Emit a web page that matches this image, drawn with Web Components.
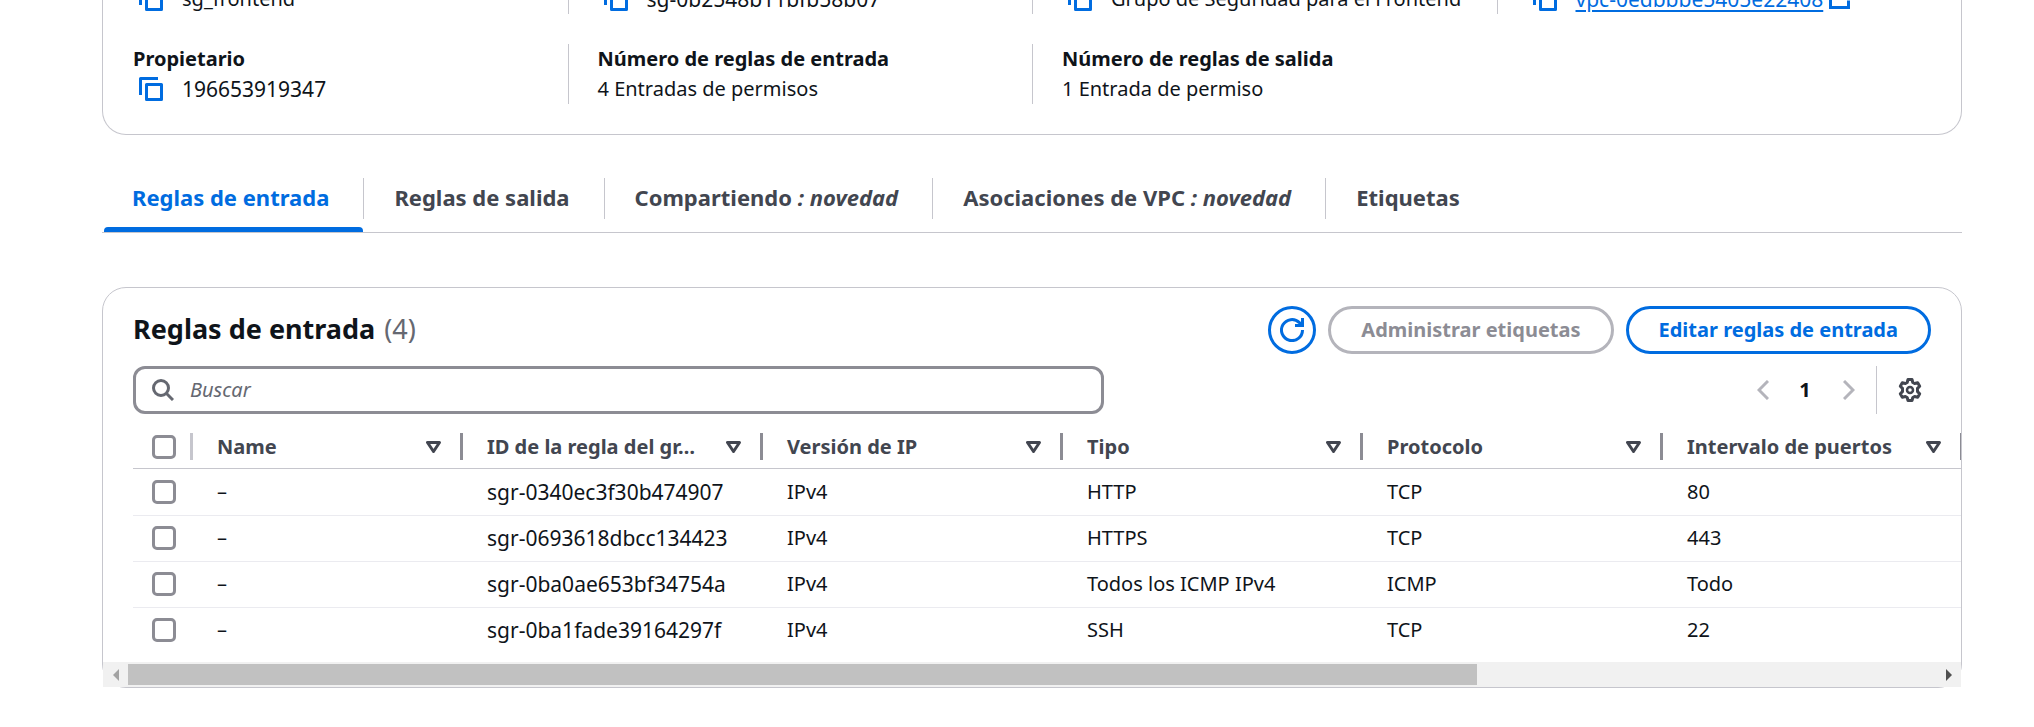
<!DOCTYPE html>
<html lang="es">
<head>
<meta charset="utf-8">
<title>sg_frontend</title>
<style>
  :root {
    --text: #0f141a;
    --heading: #424650;
    --muted: #656871;
    --link: #006ce0;
    --line: #c6c6cd;
    --line-soft: #ebebf0;
    --control: #8c8c94;
    --disabled: #b4b4bb;
    --id-size: 21px;
  }
  body {
    margin: 0;
    background: #fff;
    color: var(--text);
    font: 20px/30px "Noto Sans", "Open Sans", sans-serif;
    overflow: hidden;
  }
</style>
</head>
<body>
<security-group-page></security-group-page>

<script>
const define = (name, html, setup) => {
  const template = document.createElement('template');
  template.innerHTML = html;
  customElements.define(name, class extends HTMLElement {
    connectedCallback() {
      if (this.shadowRoot) return;
      this.attachShadow({ mode: 'open' }).append(template.content.cloneNode(true));
      if (setup) setup(this, this.shadowRoot);
    }
  });
};

/* Copy-to-clipboard button followed by its value */
define('copy-value', `
  <style>
    :host { display: flex; align-items: center; height: 30px; }
    button { display: flex; flex: none; margin: 0 19px 0 6px; padding: 0; border: 0; background: none; color: var(--link); }
  </style>
  <button type="button" aria-label="Copiar">
    <svg width="24" height="24" viewBox="0 0 24 24" fill="none" stroke="currentColor" stroke-width="3">
      <path d="M1.5 18V1.5H19" stroke-linejoin="round"/><path d="M7.5 7.5h15v15h-15z" stroke-linejoin="round"/>
    </svg>
  </button>
  <slot></slot>`);

/* External link with its trailing icon */
define('external-link', `
  <style>
    :host { display: block; }
    a { display: flex; color: var(--link); font-size: var(--id-size); text-decoration: underline; text-decoration-thickness: 2px; text-underline-offset: 3px; }
    svg { margin: 2px 0 0 6px; }
  </style>
  <a href="#vpc"><slot></slot>
    <svg width="21" height="23" viewBox="0 0 21 23" fill="none" stroke="currentColor" stroke-width="3">
      <path d="M8 3H1.500v18.500h18v-7"/><path d="M12 2h7.500v8M19.500 2L9 13"/>
    </svg>
  </a>`);

define('detail-item', `
  <style>
    :host { display: block; box-sizing: border-box; border-left: 1px solid var(--line); padding-left: 29px; }
    :host([first]) { border-color: transparent; }
    ::slotted([slot=label]) { display: block; font-weight: 700; }
  </style>
  <slot name="label"></slot><slot></slot>`);

define('detail-panel', `
  <style>
    :host { display: flow-root; }
    .panel { display: grid; grid-template-columns: repeat(4, 1fr); row-gap: 30px; margin: -16px 0 0; padding-bottom: 30px;
      border: 1px solid var(--line); border-top: 0; border-radius: 0 0 24px 24px; }
    .id { font-size: var(--id-size); }
  </style>
  <div class="panel">
    <detail-item first><copy-value>sg_frontend</copy-value></detail-item>
    <detail-item><copy-value><span class="id">sg-0b2548b11bfb58b07</span></copy-value></detail-item>
    <detail-item><copy-value>Grupo de Seguridad para el Frontend</copy-value></detail-item>
    <detail-item><copy-value><external-link>vpc-0edbbbe5405e22408</external-link></copy-value></detail-item>
    <detail-item first><span slot="label">Propietario</span><copy-value><span class="id">196653919347</span></copy-value></detail-item>
    <detail-item><span slot="label">Número de reglas de entrada</span>4 Entradas de permisos</detail-item>
    <detail-item><span slot="label">Número de reglas de salida</span>1 Entrada de permiso</detail-item>
  </div>`);

define('tab-item', `
  <style>
    :host { display: flex; flex-direction: column; }
    .label { display: flex; height: 41px; border-right: 1px solid var(--line); }
    :host([last]) .label { border-color: transparent; }
    button { height: 38px; padding: 0 34px 0 30px; border: 0; background: none; color: var(--heading); font: 700 22px/38px "Noto Sans", "Open Sans", sans-serif; white-space: pre; }
    .bar { height: 5px; margin: 8px 1px 0 2px; border-radius: 4px 4px 0 0; }
    :host([active]) button { color: var(--link); }
    :host([active]) .bar { background: var(--link); }
  </style>
  <div class="label"><button type="button" role="tab"><slot></slot></button></div>
  <div class="bar"></div>`);

define('tab-bar', `
  <style>
    :host { display: flex; margin-top: 43px; border-bottom: 1px solid var(--line); }
  </style>
  <tab-item active>Reglas de entrada</tab-item>
  <tab-item>Reglas de salida</tab-item>
  <tab-item>Compartiendo<em> : novedad</em></tab-item>
  <tab-item>Asociaciones de VPC<em> : novedad</em></tab-item>
  <tab-item last>Etiquetas</tab-item>`);

define('action-button', `
  <style>
    :host { display: block; }
    button { display: flex; align-items: center; justify-content: center; box-sizing: border-box; height: 48px; min-width: 48px;
      padding: 0 30px; border: 3px solid var(--link); border-radius: 24px; background: #fff; color: var(--link);
      font: 700 20px/30px "Noto Sans", "Open Sans", sans-serif; white-space: nowrap; }
    button:disabled { border-color: var(--disabled); color: var(--control); }
    :host([icon]) button { padding: 0; }
  </style>
  <button type="button"><slot></slot></button>`, (host, root) => {
  const button = root.querySelector('button');
  button.disabled = host.hasAttribute('disabled');
  if (host.hasAttribute('icon')) button.setAttribute('aria-label', host.getAttribute('icon'));
});

define('search-field', `
  <style>
    :host { display: block; }
    label { display: flex; align-items: center; gap: 16px; box-sizing: border-box; height: 48px; padding: 0 16px;
      border: 3px solid var(--control); border-radius: 12px; color: var(--muted); }
    svg { flex: none; }
    input { flex: 1; min-width: 0; padding: 0; border: 0; outline: 0; background: none; font: 20px/30px "Noto Sans", "Open Sans", sans-serif; }
    input::placeholder { color: var(--muted); font-style: italic; opacity: 1; }
  </style>
  <label>
    <svg width="22" height="22" viewBox="0 0 22 22" fill="none" stroke="currentColor" stroke-width="3">
      <circle cx="9" cy="9" r="7.5"/><path d="M14 14l7 7"/>
    </svg>
    <input type="text" placeholder="Buscar" aria-label="Buscar">
  </label>`);

define('page-controls', `
  <style>
    :host { display: flex; align-items: center; height: 48px; }
    button { display: flex; padding: 0; border: 0; background: none; color: var(--disabled); font: 700 20px/30px "Noto Sans", "Open Sans", sans-serif; }
    .page { width: 12px; margin: 0 32px 0 30px; justify-content: center; color: var(--text); }
    .gear { margin-left: 21px; color: var(--heading); }
    .rule { width: 1px; height: 48px; margin-left: 21px; background: var(--line); }
  </style>
  <button type="button" disabled aria-label="Página anterior"><svg width="12" height="20" viewBox="0 0 12 20" fill="none" stroke="currentColor" stroke-width="3"><path d="M11 1L2 10l9 9"/></svg></button>
  <button type="button" class="page">1</button>
  <button type="button" disabled aria-label="Página siguiente"><svg width="12" height="20" viewBox="0 0 12 20" fill="none" stroke="currentColor" stroke-width="3"><path d="M1 1l9 9-9 9"/></svg></button>
  <div class="rule"></div>
  <button type="button" class="gear" aria-label="Preferencias">
    <svg width="24" height="24" viewBox="0 0 24 24" fill="none" stroke="currentColor" stroke-width="3" stroke-linejoin="round">
      <path d="M10 1.5h4l.8 3 1.8 1 3.100-.8 2 3.500L19.500 10.400v3.200l2.200 2.200-2 3.500-3.100-.8-1.800 1-.8 3h-4l-.8-3-1.800-1-3.100.8-2-3.500L4.500 13.600v-3.200L2.300 8.200l2-3.500 3.100.8 1.800-1z"/>
      <circle cx="12" cy="12" r="3" stroke-width="2.500"/>
    </svg>
  </button>`);

define('rules-table', `
  <style>
    :host { display: block; padding-left: 30px; overflow: hidden; }
    table { width: 1830px; table-layout: fixed; border-collapse: separate; border-spacing: 0; }
    .pick { width: 60px; } .name { width: 270px; }
    th, td { box-sizing: border-box; padding: 0 0 0 24px; text-align: left; white-space: nowrap; }
    th { height: 42px; padding-bottom: 2px; border-bottom: 1px solid var(--line); color: var(--heading); font-weight: 700; }
    td { height: 46px; padding-bottom: 2px; border-bottom: 1px solid var(--line-soft); }
    tr:first-child td { height: 47px; padding-bottom: 0; }
    tr:last-child td { border-color: transparent; }
    th:first-child, td:first-child { padding-left: 19px; }
    .cell { display: flex; align-items: center; height: 27px; border-right: 3px solid var(--control); }
    .cell.light { border-color: var(--line); }
    .cell span { flex: 1; }
    .cell svg { margin-right: 19px; }
    .id { font-size: var(--id-size); }
    input { display: block; appearance: none; box-sizing: border-box; width: 24px; height: 24px; margin: 0; border: 3px solid var(--control); border-radius: 5px; background: #fff; }
  </style>
  <table>
    <colgroup><col class="pick"><col class="name"><col><col><col><col><col></colgroup>
    <thead><tr><th scope="col"><div class="cell light"><input type="checkbox" aria-label="Seleccionar todo"></div></th></tr></thead>
    <tbody></tbody>
  </table>`, (host, root) => {
  const columns = ['Name', 'ID de la regla del gr…', 'Versión de IP', 'Tipo', 'Protocolo', 'Intervalo de puertos'];
  const rows = [
    ['–', 'sgr-0340ec3f30b474907', 'IPv4', 'HTTP', 'TCP', '80'],
    ['–', 'sgr-0693618dbcc134423', 'IPv4', 'HTTPS', 'TCP', '443'],
    ['–', 'sgr-0ba0ae653bf34754a', 'IPv4', 'Todos los ICMP IPv4', 'ICMP', 'Todo'],
    ['–', 'sgr-0ba1fade39164297f', 'IPv4', 'SSH', 'TCP', '22'],
  ];
  const sort = '<svg width="15" height="12" viewBox="0 0 15 12" fill="none" stroke="currentColor" stroke-width="3" stroke-linejoin="round"><path d="M1.500 1.500h12l-6 9z"/></svg>';
  root.querySelector('thead tr').insertAdjacentHTML('beforeend',
    columns.map(c => `<th scope="col"><div class="cell"><span>${c}</span>${sort}</div></th>`).join(''));
  root.querySelector('tbody').innerHTML = rows.map(r =>
    `<tr><td><input type="checkbox" aria-label="Seleccionar ${r[1]}"></td>` +
    r.map((v, i) => `<td${i === 1 ? ' class="id"' : ''}>${v}</td>`).join('') + '</tr>').join('');
});

/* Horizontal scroll track under the table */
define('scroll-track', `
  <style>
    :host { display: flex; align-items: center; height: 25px; margin-top: 8px; background: #f1f1f1; }
    .end { display: flex; justify-content: center; width: 25px; color: #a3a3a3; }
    .end.on { color: #505050; }
    .thumb { flex: 1349; height: 21px; background: #c1c1c1; }
    .rest { flex: 459; }
  </style>
  <div class="end"><svg width="6" height="12" viewBox="0 0 6 12" fill="currentColor"><path d="M6 0v12L0 6z"/></svg></div>
  <div class="thumb"></div><div class="rest"></div>
  <div class="end on"><svg width="6" height="12" viewBox="0 0 6 12" fill="currentColor"><path d="M0 0v12l6-6z"/></svg></div>`);

define('rules-card', `
  <style>
    :host { display: block; margin-top: 54px; border: 1px solid var(--line); border-radius: 24px; }
    header { display: flex; align-items: center; gap: 12px; padding: 18px 30px 12px; }
    h2 { flex: 1; margin: 0; padding-bottom: 2px; font-size: 27px; line-height: 36px; font-weight: 700; }
    h2 span { margin-left: 2px; color: var(--muted); font-weight: 400; }
    .tools { display: flex; justify-content: space-between; padding: 0 39px 0 30px; margin-bottom: 13px; }
    search-field { width: 54.3%; }
  </style>
  <header>
    <h2>Reglas de entrada <span>(4)</span></h2>
    <action-button icon="Actualizar">
      <svg width="24" height="24" viewBox="0 0 24 24" fill="none" stroke="currentColor" stroke-width="3">
        <path d="M22.500 12A10.500 10.500 0 1 1 19.400 4.600L22 7.500"/><path d="M22.500 0v7.500H15"/>
      </svg>
    </action-button>
    <action-button disabled>Administrar etiquetas</action-button>
    <action-button>Editar reglas de entrada</action-button>
  </header>
  <div class="tools"><search-field></search-field><page-controls></page-controls></div>
  <rules-table></rules-table>
  <scroll-track></scroll-track>`);

define('security-group-page', `
  <style>:host { display: flow-root; padding: 0 72px 38px 102px; }</style>
  <detail-panel></detail-panel>
  <tab-bar></tab-bar>
  <rules-card></rules-card>`);
</script>
</body>
</html>
